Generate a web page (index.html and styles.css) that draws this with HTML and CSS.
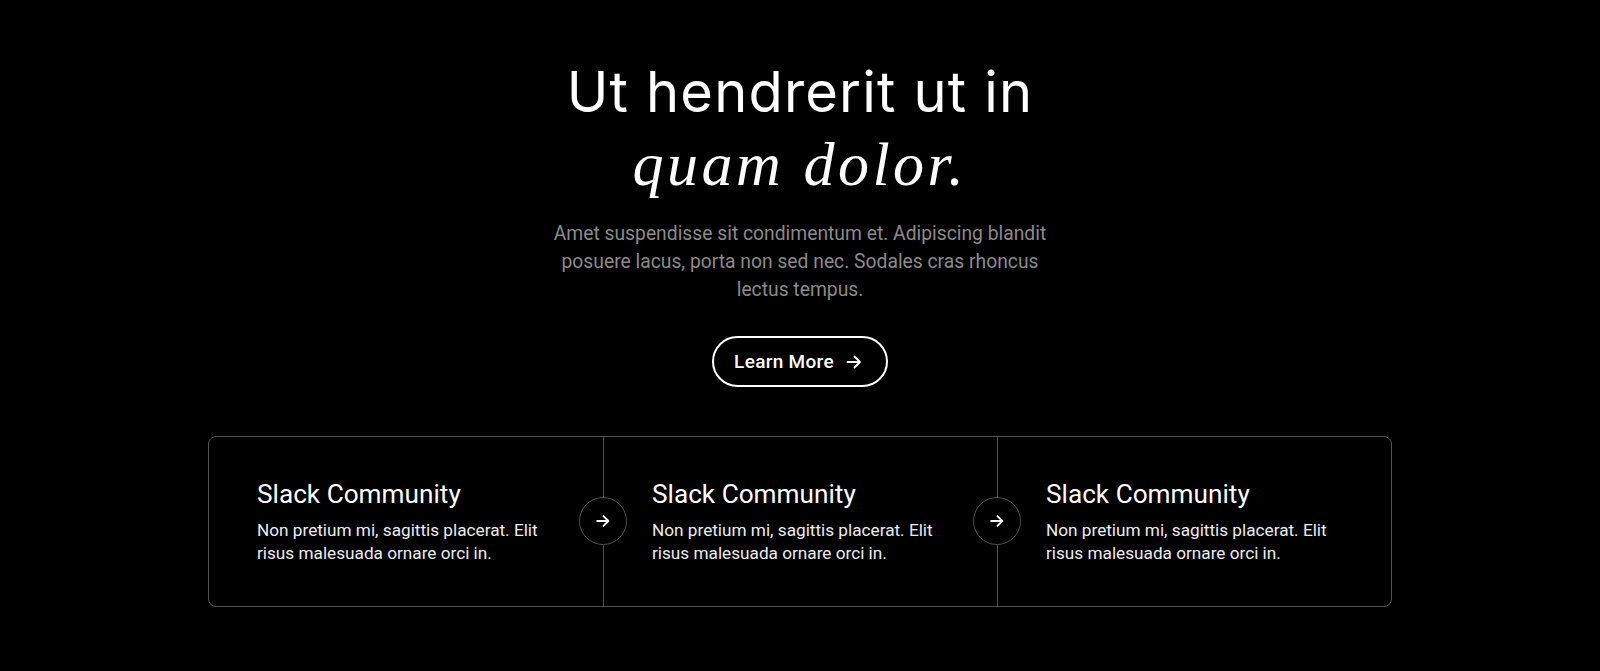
FILE: index.html
```html
<!DOCTYPE html>
<html lang="en">
<head>
  <meta charset="UTF-8">
  <title>Community</title>
  <link rel="stylesheet" href="styles.css">
</head>
<body>
<section class="hero">
  <h1 class="hero-title">
    <span class="hero-title-main">Ut hendrerit ut in</span>
    <span class="hero-title-accent">quam dolor.</span>
  </h1>
  <p class="hero-text">Amet suspendisse sit condimentum et. Adipiscing blandit posuere lacus, porta non sed nec. Sodales cras rhoncus lectus tempus.</p>
  <a class="btn-outline" href="#">
    Learn More
    <svg class="btn-icon" viewBox="0 0 20 20" width="20" height="20" aria-hidden="true">
      <path d="M3.5 10h12.5M10.5 4.5L16 10l-5.5 5.5" fill="none" stroke="currentColor" stroke-width="1.8" stroke-linecap="round" stroke-linejoin="round"/>
    </svg>
  </a>

  <div class="links">
    <div class="link-card">
      <h3>Slack Community</h3>
      <p>Non pretium mi, sagittis placerat. Elit risus malesuada ornare orci in.</p>
    </div>
    <div class="link-card">
      <span class="link-arrow">
        <svg viewBox="0 0 20 20" width="18" height="18" aria-hidden="true">
          <path d="M3.5 10h12.5M10.5 4.5L16 10l-5.5 5.5" fill="none" stroke="currentColor" stroke-width="2" stroke-linecap="round" stroke-linejoin="round"/>
        </svg>
      </span>
      <h3>Slack Community</h3>
      <p>Non pretium mi, sagittis placerat. Elit risus malesuada ornare orci in.</p>
    </div>
    <div class="link-card">
      <span class="link-arrow">
        <svg viewBox="0 0 20 20" width="18" height="18" aria-hidden="true">
          <path d="M3.5 10h12.5M10.5 4.5L16 10l-5.5 5.5" fill="none" stroke="currentColor" stroke-width="2" stroke-linecap="round" stroke-linejoin="round"/>
        </svg>
      </span>
      <h3>Slack Community</h3>
      <p>Non pretium mi, sagittis placerat. Elit risus malesuada ornare orci in.</p>
    </div>
  </div>
</section>
</body>
</html>
```

FILE: styles.css
```css
body {
  margin: 0;
  background: #000;
  color: #fff;
  font-family: Roboto, "Liberation Sans", sans-serif;
}

.hero {
  display: flex;
  flex-direction: column;
  align-items: center;
  padding-top: 56px;
  text-align: center;
}

.hero-title {
  margin: 0;
  font-weight: 400;
}

.hero-title-main {
  display: block;
  font-family: Inter, sans-serif;
  font-size: 56px;
  font-weight: 400;
  line-height: 72px;
  letter-spacing: 1.2px;
}

.hero-title-accent {
  display: block;
  font-family: "Liberation Serif", serif;
  font-style: italic;
  font-size: 62px;
  line-height: 72px;
  letter-spacing: 3.5px;
}

.hero-text {
  max-width: 500px;
  margin: 20px 0 0;
  font-size: 19.3px;
  line-height: 28px;
  color: #8a8a8a;
}

.btn-outline {
  display: inline-flex;
  align-items: center;
  gap: 10px;
  margin-top: 32px;
  padding: 13.5px 22px 13.5px 20px;
  border: 2px solid #fff;
  border-radius: 999px;
  color: #fff;
  font-size: 19px;
  font-weight: 500;
  line-height: 20px;
  letter-spacing: 0.3px;
  text-decoration: none;
}

.btn-icon {
  display: block;
}

.links {
  display: grid;
  grid-template-columns: repeat(3, 1fr);
  width: 1184px;
  margin-top: 49px;
  border: 1px solid #4f4f4f;
  border-radius: 8px;
  box-sizing: border-box;
  text-align: left;
}

.link-card {
  position: relative;
  padding: 40px 48px;
}

.link-card + .link-card {
  border-left: 1px solid #4f4f4f;
}

.link-card h3 {
  margin: 0;
  font-size: 26.2px;
  font-weight: 400;
  line-height: 34px;
}

.link-card p {
  margin: 8px 0 0;
  font-size: 17.2px;
  line-height: 23.4px;
  color: #ececec;
}

.link-arrow {
  position: absolute;
  top: 50%;
  left: -25px;
  display: flex;
  align-items: center;
  justify-content: center;
  width: 48px;
  height: 48px;
  margin-top: -24px;
  border: 1px solid #4f4f4f;
  border-radius: 50%;
  background: #000;
  box-sizing: border-box;
}
```
